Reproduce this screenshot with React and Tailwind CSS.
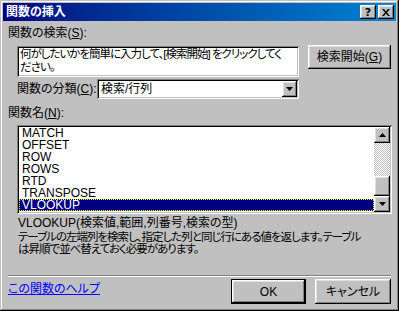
import React from "react";

const FONT = "[font-family:'Liberation_Sans','Noto_Sans_CJK_JP',sans-serif] [font-feature-settings:'palt'] text-[12px] text-black";
const RAISED = "shadow-[inset_-1px_-1px_#000000,inset_1px_1px_#ffffff,inset_-2px_-2px_#808080,inset_2px_2px_#dfdfdf] bg-[#c0c0c0]";
const SUNKEN = "shadow-[inset_1px_1px_#808080,inset_-1px_-1px_#ffffff,inset_2px_2px_#000000,inset_-2px_-2px_#c0c0c0]";

function Arrow({ up }) {
  return (
    <svg width="7" height="4" viewBox="0 0 7 4">
      {up ? (
        <polygon points="3.5,0 7,4 0,4" fill="#000" />
      ) : (
        <polygon points="0,0 7,0 3.5,4" fill="#000" />
      )}
    </svg>
  );
}

function U({ children }) {
  return <span className="underline">{children}</span>;
}

export default function App() {
  const items = ["MATCH", "OFFSET", "ROW", "ROWS", "RTD", "TRANSPOSE"];
  return (
    <div className={`w-[399px] h-[311px] bg-[#c0c0c0] p-[3px] flex flex-col shadow-[inset_-1px_-1px_#000000,inset_1px_1px_#c0c0c0,inset_-2px_-2px_#808080,inset_2px_2px_#ffffff] ${FONT}`}>
      {/* title bar */}
      <div className="h-[18px] bg-linear-to-r from-[#000080] to-[#1084d0] flex items-center pl-[3px] pr-[2px]">
        <span className="text-white font-bold leading-[12px] flex-1">関数の挿入</span>
        <div className={`w-[16px] h-[14px] ${RAISED} flex items-center justify-center text-[11px] font-bold leading-none [font-family:'DejaVu_Sans',sans-serif]`}>?</div>
        <div className={`w-[16px] h-[14px] ml-[2px] ${RAISED} flex items-center justify-center`}>
          <svg width="8" height="7" viewBox="0 0 8 7">
            <path d="M0 0h2l2 2.5L6 0h2L5 3.5 8 7H6L4 4.5 2 7H0l3-3.5z" fill="#000" />
          </svg>
        </div>
      </div>

      {/* search label */}
      <div className="mt-[6px] ml-[5px] h-[12px] leading-[12px]">
        関数の検索(<U>S</U>):
      </div>

      {/* search row */}
      <div className="mt-[6px] flex items-start">
        <div className={`ml-[14px] mt-[1px] w-[282px] h-[31px] bg-white p-[2px] ${SUNKEN}`}>
          <div className="pl-[1px] leading-[13px] whitespace-nowrap overflow-hidden text-[11.5px] tracking-[-1px]">
            <div>何がしたいかを簡単に入力して、[検索開始] をクリックしてく</div>
            <div>ださい。</div>
          </div>
        </div>
        <div className={`ml-[9px] w-[83px] h-[24px] ${RAISED} flex items-center justify-center`}>
          検索開始(<U>G</U>)
        </div>
      </div>

      {/* category row */}
      <div className="mt-[2px] ml-[14px] h-[20px] flex items-center">
        <span className="w-[80px] leading-[12px]">関数の分類(<U>C</U>):</span>
        <div className={`w-[202px] h-[20px] bg-white p-[2px] flex items-center ${SUNKEN}`}>
          <span className="flex-1 pl-[2px] leading-[12px]">検索/行列</span>
          <div className={`w-[15px] h-[16px] ${RAISED} flex items-center justify-center`}>
            <Arrow />
          </div>
        </div>
      </div>

      {/* function name label */}
      <div className="mt-[8px] ml-[5px] h-[12px] leading-[12px]">
        関数名(<U>N</U>):
      </div>

      {/* listbox */}
      <div className={`mt-[6px] ml-[14px] w-[375px] h-[89px] bg-white p-[2px] flex ${SUNKEN}`}>
        <div className="flex-1 flex flex-col">
          {items.map((t) => (
            <div key={t} className="h-[12px] leading-[12px] pl-[3px] overflow-hidden">{t}</div>
          ))}
          <div className="h-[12px] leading-[10px] pl-[2px] bg-[#000080] text-white border border-dotted border-[#ffff00] overflow-hidden">VLOOKUP</div>
        </div>
        <div className="w-[16px] flex flex-col">
          <div className={`h-[16px] ${RAISED} flex items-center justify-center`}>
            <Arrow up />
          </div>
          <div className="flex-1 bg-[repeating-conic-gradient(#c0c0c0_0%_25%,#ffffff_0%_50%)] bg-[length:2px_2px]" />
          <div className={`h-[20px] ${RAISED}`} />
          <div className={`h-[16px] ${RAISED} flex items-center justify-center`}>
            <Arrow />
          </div>
        </div>
      </div>

      {/* syntax */}
      <div className="mt-[3px] ml-[15px] h-[12px] leading-[12px] whitespace-nowrap">
        VLOOKUP(検索値,範囲,列番号,検索の型)
      </div>
      <div className="mt-[2px] ml-[15px] leading-[12px] whitespace-nowrap text-[11.5px] tracking-[-1px]">
        <div>テーブルの左端列を検索し、指定した列と同じ行にある値を返します。テーブル</div>
        <div>は昇順で並べ替えておく必要があります。</div>
      </div>

      {/* separator */}
      <div className="mt-auto mx-[5px] h-[2px] border-t border-t-[#808080] border-b border-b-white" />

      {/* bottom row */}
      <div className="mt-[2px] mb-[4px] h-[25px] flex items-start">
        <a className="ml-[5px] mt-[4px] leading-[12px] text-[#0000ff] underline flex-1">この関数のヘルプ</a>
        <div className="w-[75px] h-[25px] bg-black p-[1px]">
          <div className={`w-full h-full ${RAISED} flex items-center justify-center`}>OK</div>
        </div>
        <div className={`ml-[9px] mr-[5px] w-[76px] h-[25px] ${RAISED} flex items-center justify-center`}>
          キャンセル
        </div>
      </div>
    </div>
  );
}
